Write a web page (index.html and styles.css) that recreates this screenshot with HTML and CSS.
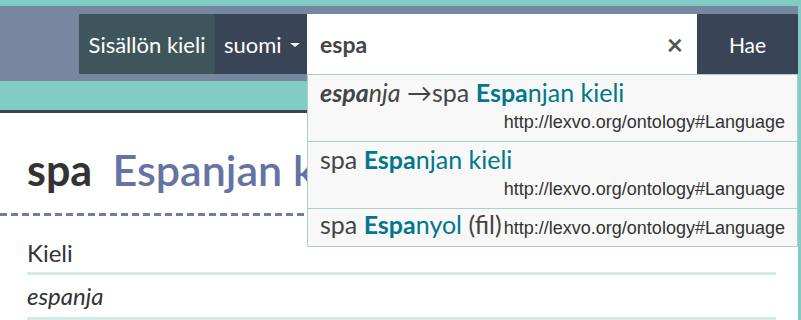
FILE: index.html
```html
<!DOCTYPE html>
<html lang="fi">
<head>
  <meta charset="UTF-8">
  <title>Espanjan kieli</title>
  <link rel="stylesheet" href="styles.css">
</head>
<body>
  <div class="page">
    <header class="topbar">
      <div class="lang-label">Sisällön kieli</div>
      <div class="lang-select">suomi<span class="caret"></span></div>
      <div class="search-field">
        <span class="query">espa</span>
        <span class="clear">&times;</span>
      </div>
      <button class="search-btn">Hae</button>
    </header>
    <div class="band"></div>

    <main class="content">
      <h1 class="pref"><span class="notation">spa</span> <span class="label">Espanjan kieli</span></h1>
    </main>
    <div class="dashed"></div>
    <section class="props">
      <div class="prop-row">Kieli</div>
      <div class="prop-row alt">espanja</div>
    </section>

    <ul class="suggestions">
      <li class="sugg stacked">
        <div class="sugg-label"><span class="match-alt"><b>espa</b>nja</span> <span class="arrow">&rarr;</span>spa <span class="hit"><b>Espa</b>njan kieli</span></div>
        <div class="sugg-type">http://lexvo.org/ontology#Language</div>
      </li>
      <li class="sugg stacked">
        <div class="sugg-label">spa <span class="hit"><b>Espa</b>njan kieli</span></div>
        <div class="sugg-type">http://lexvo.org/ontology#Language</div>
      </li>
      <li class="sugg inline">
        <div class="sugg-label">spa <span class="hit"><b>Espa</b>nyol</span> (fil)</div>
        <div class="sugg-type">http://lexvo.org/ontology#Language</div>
      </li>
    </ul>
  </div>
</body>
</html>
```

FILE: styles.css
```css
:root {
  --teal: #81cdc5;
  --slate: #7787a0;
  --dark: #394556;
  --dark-teal: #3f555c;
  --blue: #6473a2;
  --hit: #00778b;
  --line: #a9d0ca;
  --text: #333;
}

body {
  margin: 0;
  font-family: 'Lato', sans-serif;
  color: var(--text);
  background: white;
}

.page {
  position: relative;
  min-height: 314px;
  border-top: 6px solid var(--teal);
  border-right: 3px solid var(--teal);
  overflow: hidden;
}

.topbar {
  display: flex;
  justify-content: flex-end;
  background: var(--slate);
  padding: 8px 0 7px;
  height: 60px;
  font-size: 22px;
  color: white;
}

.lang-label {
  background: var(--dark-teal);
  width: 136px;
  display: flex;
  align-items: center;
  justify-content: center;
}

.lang-select {
  background: var(--dark);
  width: 92px;
  display: flex;
  align-items: center;
  padding-left: 9px;
  box-sizing: border-box;
}

.caret {
  display: inline-block;
  margin: 2px 0 0 8px;
  border-left: 5px solid transparent;
  border-right: 5px solid transparent;
  border-top: 4px solid white;
}

.search-field {
  background: white;
  width: 390px;
  display: flex;
  align-items: center;
  justify-content: space-between;
  padding: 0 14px 0 13px;
  box-sizing: border-box;
  color: #444;
}

.query {
  font-weight: bold;
  font-size: 23px;
}

.clear {
  font-size: 28px;
  font-weight: bold;
  color: #555;
}

.search-btn {
  width: 101px;
  background: var(--dark);
  color: white;
  border: none;
  font-family: inherit;
  font-size: 21px;
}

.band {
  height: 29px;
  background: var(--teal);
  border-bottom: 3px solid var(--dark);
}

.content {
  padding: 0 22px 0 27px;
}

.pref {
  margin: 27px 0 0;
  font-size: 43px;
  line-height: 60px;
  white-space: nowrap;
}

.notation {
  font-weight: bold;
}

.label {
  color: var(--blue);
  font-weight: 600;
  margin-left: 10px;
}

.dashed {
  margin-top: 13px;
  height: 3px;
  background: repeating-linear-gradient(90deg, #6f7ea6 0 7px, transparent 7px 11px);
}

.props {
  margin: 16px 22px 0 27px;
  font-size: 24px;
}

.prop-row {
  border-bottom: 3px solid #d4ece8;
  padding-top: 2px;
  line-height: 38px;
}

.prop-row.alt {
  font-style: italic;
  padding-top: 0;
  line-height: 42px;
}

.suggestions {
  position: absolute;
  top: 68px;
  left: 307px;
  width: 489px;
  margin: 0;
  padding: 0;
  list-style: none;
  background: #f8f8f8;
  border: 1px solid var(--line);
  font-size: 25px;
  color: #444;
}

.sugg {
  padding: 2px 12px 0 12px;
  border-bottom: 1px solid var(--line);
}

.sugg:last-child {
  border-bottom: none;
}

.sugg.stacked {
  height: 64px;
}

.sugg.inline {
  display: flex;
  justify-content: space-between;
  align-items: baseline;
  height: 37px;
  padding-top: 0;
  white-space: nowrap;
}

.sugg-label {
  line-height: 30px;
}

.sugg-type {
  font-family: 'Liberation Sans', sans-serif;
  font-size: 18px;
  text-align: right;
  line-height: 30px;
  color: #333;
}

.match-alt {
  font-style: italic;
}

.hit {
  color: var(--hit);
}
```
